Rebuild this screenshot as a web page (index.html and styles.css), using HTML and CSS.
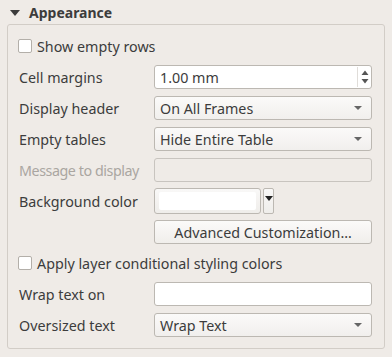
FILE: index.html
```html
<!DOCTYPE html>
<html lang="en">
<head>
  <meta charset="UTF-8">
  <title>Appearance</title>
  <link rel="stylesheet" href="styles.css">
</head>
<body>
  <div class="header">
    <svg class="toggle" width="12" height="8" viewBox="0 0 12 8"><path d="M1 1 L11 1 L6 7 Z" fill="#3c3c3c"/></svg>
    <span class="title">Appearance</span>
  </div>

  <div class="group">
    <div class="form">
      <label class="check span">
        <span class="box"></span>
        Show empty rows
      </label>

      <div class="label">Cell margins</div>
      <div class="input spin">
        <span>1.00 mm</span>
        <span class="arrows">
          <svg width="8" height="16" viewBox="0 0 8 16"><path d="M0.5 6 L4 1.5 L7.5 6 Z M0.5 10 L4 14.5 L7.5 10 Z" fill="#555"/></svg>
        </span>
      </div>

      <div class="label">Display header</div>
      <div class="combo"><span>On All Frames</span><span class="caret"></span></div>

      <div class="label">Empty tables</div>
      <div class="combo"><span>Hide Entire Table</span><span class="caret"></span></div>

      <div class="label disabled">Message to display</div>
      <div class="input disabled"></div>

      <div class="label">Background color</div>
      <div class="color-row">
        <div class="color-btn"><span class="swatch"></span></div>
        <div class="color-menu"><span class="caret dark"></span></div>
      </div>

      <div></div>
      <div class="button">Advanced Customization…</div>

      <label class="check span">
        <span class="box"></span>
        Apply layer conditional styling colors
      </label>

      <div class="label">Wrap text on</div>
      <div class="input"></div>

      <div class="label">Oversized text</div>
      <div class="combo"><span>Wrap Text</span><span class="caret"></span></div>
    </div>
  </div>
</body>
</html>
```

FILE: styles.css
```css
body {
  margin: 0;
  background-color: #efebe7;
  color: #3c3c3c;
  font-family: "Noto Sans", "Open Sans", sans-serif;
  font-size: 14.3px;
  width: 392px;
  height: 357px;
  overflow: hidden;
}

.header {
  display: flex;
  align-items: center;
  height: 24px;
  padding-left: 9px;
}

.toggle {
  margin-right: 8px;
  margin-top: 1px;
}

.title {
  font-weight: bold;
  font-size: 14px;
}

.group {
  margin: 0 7px;
  border: 1px solid #d2cdc7;
  border-radius: 3px;
  padding: 9px 13px 11px 11px;
}

.form {
  display: grid;
  grid-template-columns: 135px 218px;
  grid-auto-rows: 24px;
  row-gap: 7px;
  align-items: center;
}

.span {
  grid-column: 1 / span 2;
}

.check {
  display: flex;
  align-items: center;
}

.box {
  width: 12px;
  height: 12px;
  border: 1px solid #b3afa9;
  background: #fff;
  border-radius: 2px;
  margin: 0 5px 0 -1px;
}

.label.disabled {
  color: #aaa6a1;
  letter-spacing: -0.45px;
  white-space: nowrap;
}

.input,
.combo,
.button,
.color-btn,
.color-menu {
  box-sizing: border-box;
  height: 24px;
  border: 1px solid #bcb8b2;
  border-radius: 3px;
}

.input {
  background: #fff;
  display: flex;
  align-items: center;
  padding-left: 5px;
}

.input.disabled {
  background: #efebe7;
  border-color: #c8c4bf;
}

.spin {
  justify-content: space-between;
  padding-right: 2px;
}

.arrows {
  display: flex;
  border-left: 1px solid #e0ddd9;
  padding-left: 3px;
  height: 20px;
  align-items: center;
}

.combo {
  display: flex;
  align-items: center;
  justify-content: space-between;
  padding: 0 9px 0 5px;
  background: linear-gradient(#fbfaf9, #f1efed);
}

.caret {
  width: 0;
  height: 0;
  border-left: 4px solid transparent;
  border-right: 4px solid transparent;
  border-top: 4px solid #666;
}

.caret.dark {
  border-top-color: #222;
  border-top-width: 5px;
}

.color-row {
  display: flex;
  height: 26px;
  gap: 2px;
}

.color-btn {
  width: 107px;
  height: 26px;
  padding: 3px 4px;
  background: linear-gradient(#f9f8f7, #efedea);
}

.swatch {
  display: block;
  height: 18px;
  background: #fff;
  border-radius: 2px;
}

.color-menu {
  width: 11px;
  height: 26px;
  display: flex;
  justify-content: center;
  padding-top: 7px;
  border-radius: 2px;
  background: linear-gradient(#f9f8f7, #efedea);
}

.button {
  display: flex;
  align-items: center;
  justify-content: center;
  background: linear-gradient(#fbfaf9, #f0eeeb);
}
```
